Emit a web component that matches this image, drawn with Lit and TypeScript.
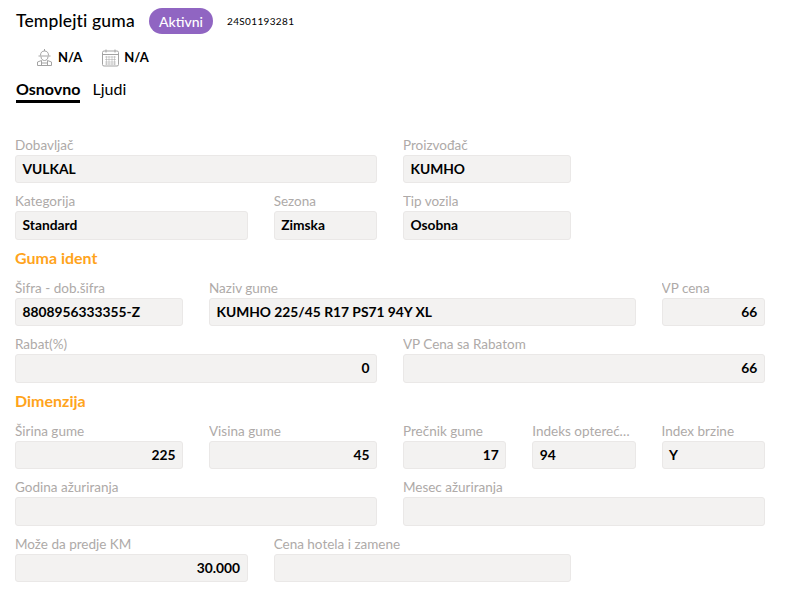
import { LitElement, html, css } from "lit";
import { customElement } from "lit/decorators.js";

type F = { l: string; v?: string; s: number; r?: boolean };
const rows: (F | string)[] = [
  { l: "Dobavljač", v: "VULKAL", s: 6 },
  { l: "Proizvođač", v: "KUMHO", s: 3 },
  { l: "", s: 3 },
  { l: "Kategorija", v: "Standard", s: 4 },
  { l: "Sezona", v: "Zimska", s: 2 },
  { l: "Tip vozila", v: "Osobna", s: 3 },
  { l: "", s: 3 },
  "Guma ident",
  { l: "Šifra - dob.šifra", v: "8808956333355-Z", s: 3 },
  { l: "Naziv gume", v: "KUMHO 225/45 R17 PS71 94Y XL", s: 7 },
  { l: "VP cena", v: "66", s: 2, r: true },
  { l: "Rabat(%)", v: "0", s: 6, r: true },
  { l: "VP Cena sa Rabatom", v: "66", s: 6, r: true },
  "Dimenzija",
  { l: "Širina gume", v: "225", s: 3, r: true },
  { l: "Visina gume", v: "45", s: 3, r: true },
  { l: "Prečnik gume", v: "17", s: 2, r: true },
  { l: "Indeks opterećenja", v: "94", s: 2 },
  { l: "Index brzine", v: "Y", s: 2 },
  { l: "Godina ažuriranja", s: 6 },
  { l: "Mesec ažuriranja", s: 6 },
  { l: "Može da predje KM", v: "30.000", s: 4, r: true },
  { l: "Cena hotela i zamene", s: 5 },
];

@customElement("app-root")
export class AppRoot extends LitElement {
  static styles = css`
    :host { display: block; width: 793px; height: 598px; overflow: hidden; background: #fff; font-family: "Lato", "Noto Sans", sans-serif; color: #000; }
    .head { display: flex; align-items: center; padding: 8px 0 0 16px; height: 26px; }
    h1 { margin: 0; font-size: 17.5px; font-weight: 500; letter-spacing: .15px; line-height: 26px; width: 133px; white-space: nowrap; }
    .badge { background: #9065c2; color: #fff; border-radius: 13px; height: 26px; width: 64px; display: flex; align-items: center; justify-content: center; font-size: 14px; font-weight: 500; }
    .code { font-size: 10px; margin-left: 14px; letter-spacing: .35px; }
    .meta { display: flex; align-items: center; padding: 11px 0 0 35px; height: 24px; font-size: 13px; font-weight: 700; }
    .meta svg { width: 19px; height: 19px; margin-right: 4px; }
    .meta span { margin-right: 19px; }
    .tabs { display: flex; gap: 12px; padding: 10px 0 0 16px; font-size: 16px; }
    .tab { height: 24px; line-height: 20px; box-sizing: border-box; }
    .tab.on { font-weight: 700; border-bottom: 3px solid #000; }
    .grid { display: grid; grid-template-columns: repeat(12, 38.67px); column-gap: 26px; padding: 33.8px 0 0 15px; align-items: start; }
    .f { min-width: 0; height: 56.5px; display: flex; flex-direction: column; }
    .l { font-size: 13.5px; line-height: 17px; height: 18px; color: #aeaaa8; white-space: nowrap; overflow: hidden; text-overflow: ellipsis; }
    .v { height: 28.5px; box-sizing: border-box; background: #f3f2f1; border: 1px solid #eae8e7; border-radius: 3px; padding: 0 6.500px; font-size: 13.8px; font-weight: 700; line-height: 26.5px; white-space: nowrap; }
    .v.r { text-align: right; }
    h2 { grid-column: span 12; margin: 0; font-size: 16px; font-weight: 700; color: #ffa41c; height: 30px; line-height: 15px; }
    .s2 { grid-column: span 2; } .s3 { grid-column: span 3; } .s4 { grid-column: span 4; }
    .s5 { grid-column: span 5; } .s6 { grid-column: span 6; } .s7 { grid-column: span 7; }
  `;

  private field(f: F) {
    if (!f.l) return html`<div class="s${f.s}"></div>`;
    return html`<div class="f s${f.s}">
      <div class="l">${f.l}</div>
      <div class="v ${f.r ? "r" : ""}">${f.v ?? ""}</div>
    </div>`;
  }

  render() {
    return html`
      <div class="head">
        <h1>Templejti guma</h1>
        <div class="badge">Aktivni</div>
        <div class="code">24S01193281</div>
      </div>
      <div class="meta">
        <svg viewBox="0 0 19 19" fill="none" stroke="#a3a3a3" stroke-width="1">
          <path d="M9.500 1v2M5.500 7.500c0-3 1.500-4.500 4-4.500s4 1.500 4 4.500M3.500 8h12M6 8.500c0 2.500 1.500 4 3.500 4s3.500-1.500 3.500-4M6.500 12.500 2.500 14v3.500h14V14l-4-1.500M6.500 12.500v5M12.500 12.500v5M6.500 15h6"/>
        </svg>
        <span>N/A</span>
        <svg viewBox="0 0 19 19" fill="none" stroke="#a3a3a3" stroke-width="1">
          <rect x="1.500" y="3" width="16" height="15" rx="1.500"/>
          <path d="M1.500 6.500h16M5 1.500v3M14 1.500v3"/>
          <path d="M4 9h11M4 11.500h11M4 14h11M4 16h11M5.500 8v9M8 8v9M11 8v9M13.500 8v9" stroke-width=".6" opacity=".8"/>
        </svg>
        <span>N/A</span>
      </div>
      <div class="tabs">
        <div class="tab on">Osnovno</div>
        <div class="tab">Ljudi</div>
      </div>
      <div class="grid">
        ${rows.map((r) => (typeof r === "string" ? html`<h2>${r}</h2>` : this.field(r)))}
      </div>
    `;
  }
}
